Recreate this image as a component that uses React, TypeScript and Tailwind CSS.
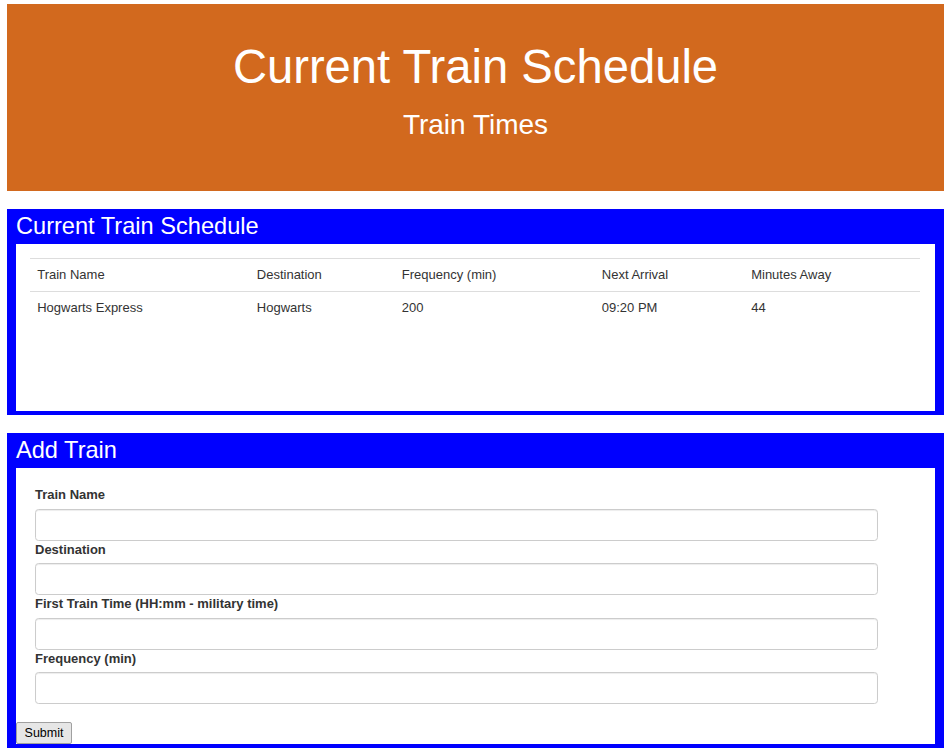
import React from "react";

const cols = [
  { label: "Train Name", w: "w-[219.6px]" },
  { label: "Destination", w: "w-[145px]" },
  { label: "Frequency (min)", w: "w-[200px]" },
  { label: "Next Arrival", w: "w-[149.4px]" },
  { label: "Minutes Away", w: "w-[176px]" },
];

const row = ["Hogwarts Express", "Hogwarts", "200", "09:20 PM", "44"];

const fields = [
  "Train Name",
  "Destination",
  "First Train Time (HH:mm - military time)",
  "Frequency (min)",
];

export default function App() {
  return (
    <div className="min-h-[755px] bg-white font-['Liberation_Sans',Arial,sans-serif] pt-[4px] px-[7px] pr-[5px]">
      {/* Header */}
      <div className="h-[187px] bg-[#d2691e] text-white flex flex-col items-center pt-[38.5px]">
        <h1 className="text-[47.2px] leading-none font-normal whitespace-nowrap">Current Train Schedule</h1>
        <h2 className="mt-[21.5px] text-[28px] leading-none font-normal whitespace-nowrap">Train Times</h2>
      </div>

      {/* Schedule panel */}
      <div className="mt-[18px] bg-[#0000ff] px-[9px] pb-[4px]">
        <div className="h-[35px] pt-[6px] text-white text-[23.6px] leading-none whitespace-nowrap">
          Current Train Schedule
        </div>
        <div className="h-[167px] bg-white pt-[14px] pl-[14px] pr-[15px]">
          <table className="w-[890px] table-fixed border-collapse text-[13px] leading-[18px] text-[#333]">
            <tbody>
              <tr>
                {cols.map((c) => (
                  <td key={c.label} className={`${c.w} border-t border-[#ddd] px-[7.2px] py-[7.2px] text-left align-top whitespace-nowrap`}>
                    {c.label}
                  </td>
                ))}
              </tr>
              <tr>
                {row.map((v, i) => (
                  <td key={i} className="border-t border-[#ddd] px-[7.2px] pt-[6.5px] pb-[7.9px] text-left align-top whitespace-nowrap">
                    {v}
                  </td>
                ))}
              </tr>
            </tbody>
          </table>
        </div>
      </div>

      {/* Add Train panel */}
      <div className="mt-[18px] bg-[#0000ff] px-[9px] pb-[4px]">
        <div className="h-[35px] pt-[6px] text-white text-[23.6px] leading-none whitespace-nowrap">Add Train</div>
        <div className="bg-white pt-[18px]">
          <div className="pl-[19px]">
            {fields.map((f) => (
              <div key={f}>
                <label className="block h-[18px] mb-[4.5px] text-[13px] leading-[17px] font-bold text-[#333] whitespace-nowrap">
                  {f}
                </label>
                <input
                  type="text"
                  className="block w-[843px] h-[32px] border border-[#ccc] rounded-[3.6px] bg-white shadow-[inset_0_1px_1px_rgba(0,0,0,0.075)] outline-none"
                />
              </div>
            ))}
          </div>
          <div className="pt-[18px]">
            <button className="block w-[56px] h-[22px] border border-[#a0a0a0] bg-[#e6e6e6] rounded-[2px] text-[12.5px] leading-none text-black">
              Submit
            </button>
          </div>
        </div>
      </div>
    </div>
  );
}
